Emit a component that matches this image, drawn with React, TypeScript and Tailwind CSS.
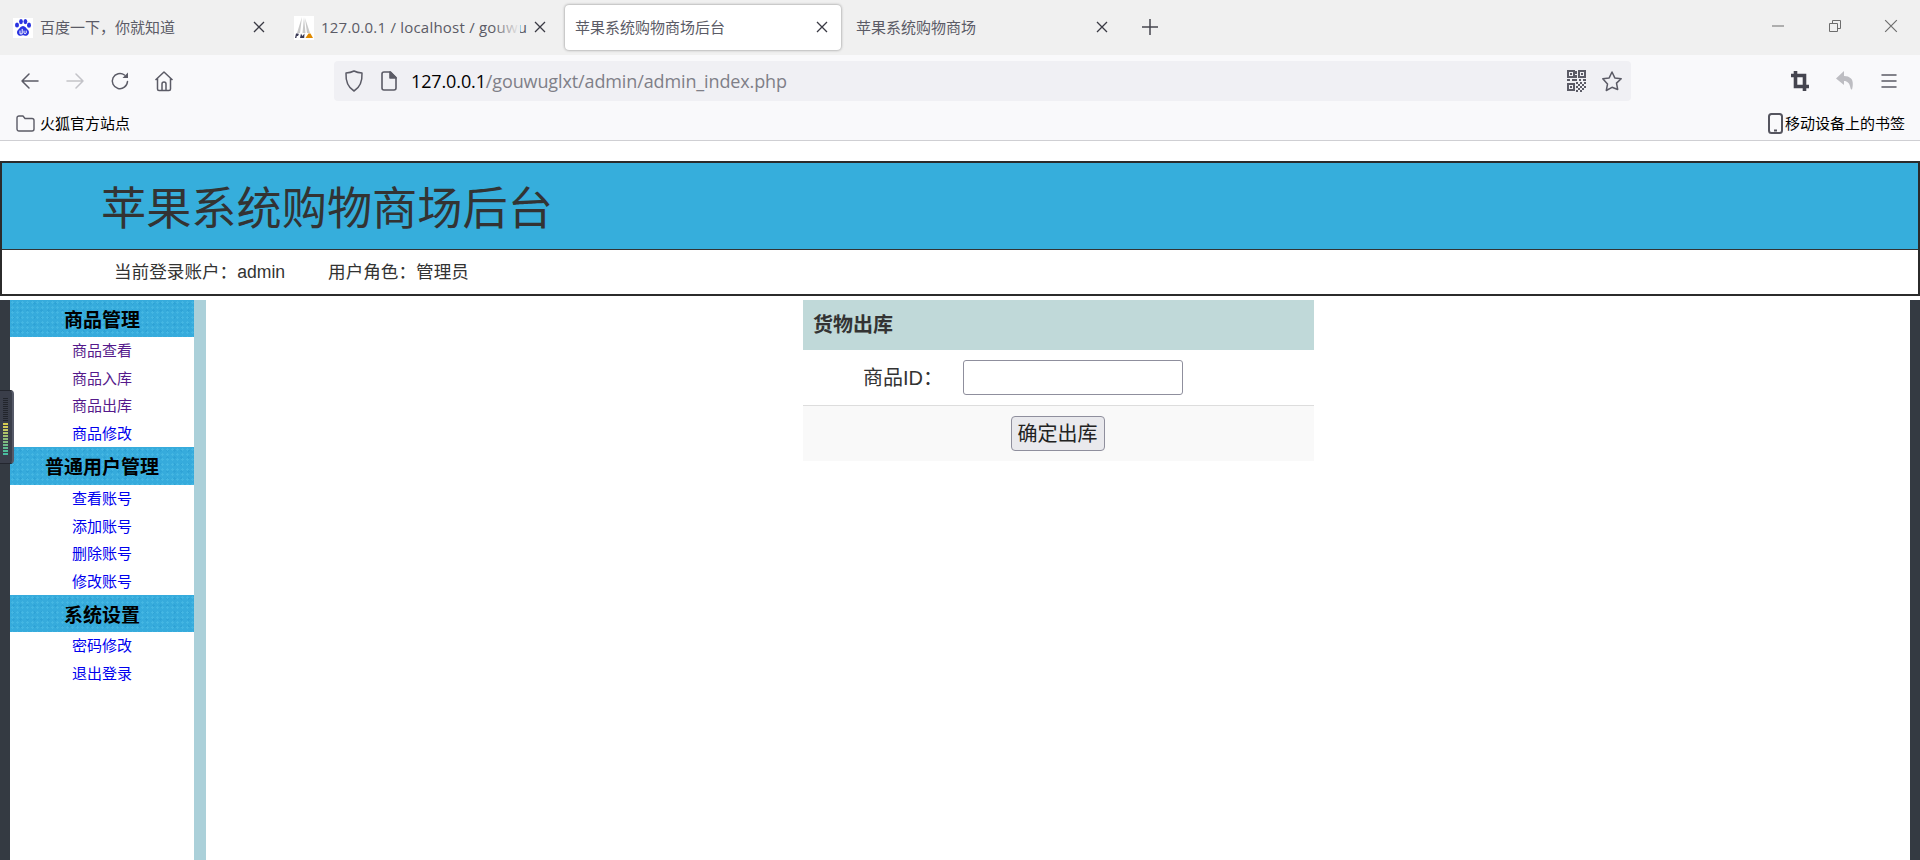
import React from "react";

const UI = { fontFamily: '"Open Sans","Noto Sans CJK SC",sans-serif' };
const PAGE = { fontFamily: '"Liberation Sans","Noto Sans CJK SC",sans-serif' };

const CloseX = ({ size = 12, color = "#3a3a44", width = 1.3 }: { size?: number; color?: string; width?: number }) => (
  <svg width={size} height={size} viewBox="0 0 12 12" fill="none" stroke={color} strokeWidth={width}>
    <path d="M1 1l10 10M11 1L1 11" />
  </svg>
);

const BaiduIcon = () => (
  <svg width="20" height="20" viewBox="0 0 20 20" className="bg-white">
    <g fill="#2932e1">
      <ellipse cx="4" cy="7" rx="2" ry="2.6" />
      <ellipse cx="8" cy="3.6" rx="1.9" ry="2.6" />
      <ellipse cx="12.4" cy="3.6" rx="1.9" ry="2.6" />
      <ellipse cx="16" cy="7.2" rx="2" ry="2.6" />
      <path d="M10 8c2.4 0 3 2.4 4.8 3.8 2 1.6 1.4 5.6-1.6 6-1.4.2-2.2-.5-3.2-.5s-1.8.7-3.2.5c-3-.4-3.6-4.4-1.6-6C7 10.4 7.6 8 10 8z" />
    </g>
    <path d="M7 12.5v3.4h2.2v-5M11 12.6v2.4c0 .9 2.2.9 2.2 0v-2.400" fill="none" stroke="#fff" strokeWidth="1" />
  </svg>
);

const PmaIcon = () => (
  <svg width="20" height="24" viewBox="0 0 20 24" className="bg-white">
    <path d="M8 1L3 17h3zM10 1L8.500 17h3zM11 2l2 15h3z" fill="#c9c9c9" />
    <path d="M1 22l1-4.500h2.400l.4 1.200-1 1.400H2.800L2.400 22zM6 22l1-4.500 1.400 2.400L10.500 17.500 10.200 22z" fill="#3a3a55" />
    <path d="M11.500 22l3-4.500h2l2.500 4.500z" fill="#e08a00" />
  </svg>
);

const Tab = ({ w, icon, title, active, closeGap, textClass, fade }: any) => (
  <div className={`relative flex h-[45px] shrink-0 items-center ${w} ${active ? "rounded bg-white shadow-[0_0_3px_rgba(0,0,0,0.45)]" : ""}`}>
    {icon}
    <span className={`text-[15px] leading-none text-[#5b5b66] whitespace-nowrap ${textClass ?? ""}`}>{title}</span>
    {fade && <span className="absolute left-[210px] top-[10px] h-[24px] w-[27px] bg-gradient-to-r from-transparent to-[#f0f0f0]" />}
    <span className={`absolute top-[16px] flex ${closeGap}`}><CloseX /></span>
  </div>
);

const Back = ({ color = "#5b5b66" }: { color?: string }) => (
  <svg width="20" height="20" viewBox="0 0 20 20" fill="none" stroke={color} strokeWidth="1.5" strokeLinecap="round" strokeLinejoin="round">
    <path d="M18 10H2M9 3l-7 7 7 7" />
  </svg>
);

const Reload = () => (
  <svg width="20" height="20" viewBox="0 0 20 20" fill="none" stroke="#5b5b66" strokeWidth="1.5" strokeLinecap="round">
    <path d="M17.5 10.5A7.6 7.6 0 1 1 14.5 4" />
    <path d="M18 1.5V7h-5.5z" fill="#5b5b66" stroke="none" />
  </svg>
);

const Home = () => (
  <svg width="20" height="22" viewBox="0 0 20 22" fill="none" stroke="#5b5b66" strokeWidth="1.5" strokeLinejoin="round">
    <path d="M1.500 10L10 2l8.500 8M3.500 8.500V19a1.500 1.500 0 0 0 1.500 1.500h10a1.500 1.500 0 0 0 1.500-1.500V8.500M8 20.500V14a2 2 0 0 1 4 0v6.500" />
  </svg>
);

const Shield = () => (
  <svg width="20" height="24" viewBox="0 0 20 24" fill="none" stroke="#5b5b66" strokeWidth="1.5" strokeLinejoin="round">
    <path d="M10 2c2.500 1.300 5 1.900 8 2 .4 8-1.300 14-8 18C3.300 18 1.600 12 2 4c3-.1 5.500-.7 8-2z" />
  </svg>
);

const PageIcon = () => (
  <svg width="16" height="20" viewBox="0 0 16 20" fill="none" stroke="#5b5b66" strokeWidth="1.6" strokeLinejoin="round">
    <path d="M3 1h6.500L15 6.500V17a2 2 0 0 1-2 2H3a2 2 0 0 1-2-2V3a2 2 0 0 1 2-2z" />
    <path d="M9 1v6h6z" fill="#5b5b66" />
  </svg>
);

const Qr = () => (
  <svg width="19" height="22" viewBox="0 0 19 22" shapeRendering="crispEdges">
    <g fill="none" stroke="#5b5b66" strokeWidth="1.5">
      <rect x="1" y="1" width="6" height="6" />
      <rect x="12" y="1" width="6" height="6" />
      <rect x="1" y="14" width="6" height="6" />
    </g>
    <g fill="#5b5b66">
      <rect x="3" y="3" width="2" height="2" />
      <rect x="14" y="3" width="2" height="2" />
      <rect x="3" y="16" width="2" height="2" />
      <rect x="8" y="1" width="2" height="3" />
      <rect x="8" y="5" width="2" height="3" />
      <rect x="0" y="9" width="3" height="2" />
      <rect x="5" y="9" width="5" height="2" />
      <rect x="12" y="9" width="2" height="2" />
      <rect x="16" y="9" width="3" height="2" />
      <rect x="9" y="12" width="2" height="2" />
      <rect x="13" y="12" width="2" height="2" />
      <rect x="17" y="12" width="2" height="2" />
      <rect x="11" y="14" width="2" height="2" />
      <rect x="15" y="14" width="2" height="2" />
      <rect x="9" y="16" width="2" height="2" />
      <rect x="13" y="16" width="2" height="2" />
      <rect x="17" y="16" width="2" height="2" />
      <rect x="11" y="18" width="2" height="2" />
      <rect x="15" y="18" width="2" height="2" />
      <rect x="9" y="20" width="2" height="2" />
      <rect x="13" y="20" width="2" height="2" />
    </g>
  </svg>
);

const Star = () => (
  <svg width="22" height="22" viewBox="0 0 22 22" fill="none" stroke="#5b5b66" strokeWidth="1.5" strokeLinejoin="round">
    <path d="M11 2l2.800 5.900 6.400.8-4.700 4.400 1.200 6.400L11 17.300l-5.700 3.200 1.200-6.400L1.800 8.700l6.400-.8z" />
  </svg>
);

const Crop = () => (
  <svg width="18" height="20" viewBox="0 0 18 20" fill="none" stroke="#45454f" strokeWidth="3.6">
    <path d="M4.500 0v15.500H18M0 4.500h13.500V20" />
  </svg>
);

const Undo = () => (
  <svg width="18" height="22" viewBox="0 0 18 22" fill="#bdbdc2">
    <path d="M8 1L0 8.500 8 15v-4c3.500 0 5.500 2 6.500 7 .2 1 .8 1.500 1.500 1.500 1-3.500 1.500-8.500-1-11-1.700-1.700-4-2.500-7-2.500z" />
  </svg>
);

const Menu = () => (
  <svg width="16" height="16" viewBox="0 0 16 16" stroke="#5b5b66" strokeWidth="1.5" strokeLinecap="round">
    <path d="M1 2h14M1 8h14M1 14h14" />
  </svg>
);

const Folder = () => (
  <svg width="19" height="17" viewBox="0 0 19 17" fill="none" stroke="#5b5b66" strokeWidth="1.4" strokeLinejoin="round">
    <path d="M1 3a2 2 0 0 1 2-2h4l2 2.500h7a2 2 0 0 1 2 2V14a2 2 0 0 1-2 2H3a2 2 0 0 1-2-2z" />
  </svg>
);

const Phone = () => (
  <svg width="15" height="21" viewBox="0 0 15 21" fill="none" stroke="#55555f" strokeWidth="2">
    <rect x="1" y="1" width="13" height="19" rx="2.500" />
    <rect x="6" y="16.500" width="3" height="2" fill="#55555f" stroke="none" />
  </svg>
);

const LED = ["#d8cc50", "#d4cc58", "#c4c860", "#b0c468", "#a0c070", "#90bc78", "#80bc80", "#70bc88", "#60bc90", "#50bc98", "#48bca0", "#40bca8"];

const Slider = () => (
  <div className="absolute left-0 top-[390px] h-[74px] w-[14px] rounded-r-[4px] border-r-2 border-b border-t border-r-[#565a68] border-b-[#23262e] border-t-[#23262e] bg-[#3a3e4a]">
    <svg width="5" height="58" viewBox="0 0 5 58" className="ml-[3px] mt-[7px]" shapeRendering="crispEdges">
      {Array.from({ length: 12 }).map((_, i) => (
        <rect key={i} x="0" y={i * 2} width="5" height="1" fill="#22252c" />
      ))}
      {LED.map((c, i) => (
        <rect key={c} x="0" y={25 + i * 3} width="5" height="2" fill={c} />
      ))}
    </svg>
  </div>
);

const SideHead = ({ title, h }: { title: string; h: string }) => (
  <div className={`flex ${h} items-center justify-center bg-[#36abdc] bg-[radial-gradient(#44b6e2_1.2px,transparent_1.4px),radial-gradient(#2fa3d6_1px,transparent_1.2px)] bg-[length:5px_5px,7px_7px] pt-[3px] text-[19px] font-bold leading-none text-black`}>
    {title}
  </div>
);

const SideLink = ({ label, visited }: { label: string; visited?: boolean }) => (
  <a className={`flex h-[27.5px] items-center justify-center pt-[1px] text-[15px] ${visited ? "text-[#551a8b]" : "text-[#0000ee]"}`}>{label}</a>
);

export default function App() {
  return (
    <div className="relative flex h-[860px] w-[1920px] flex-col overflow-hidden bg-white">
      {/* browser chrome */}
      <div style={UI} className="flex h-[55px] items-start bg-[#f0f0f0] pt-[5px]">
        <Tab w="w-[283px]" icon={<span className="ml-[13px] mr-[7px] flex"><BaiduIcon /></span>} title="百度一下，你就知道" closeGap="left-[253px]" />
        <Tab w="w-[282px]" fade icon={<span className="ml-[11px] mr-[7px] flex"><PmaIcon /></span>} title="127.0.0.1 / localhost / gouwu" textClass="tracking-[0.22px]" closeGap="left-[251px]" />
        <Tab w="w-[276px]" active title="苹果系统购物商场后台" textClass="ml-[10px]" closeGap="left-[251px]" />
        <Tab w="w-[300px]" title="苹果系统购物商场" textClass="ml-[15px]" closeGap="left-[255px]" />
        <span className="mt-[13px] flex">
          <svg width="18" height="18" viewBox="0 0 18 18" stroke="#45454f" strokeWidth="1.5"><path d="M9 1v16M1 9h16" /></svg>
        </span>
        <div className="ml-auto flex items-center pt-[14px]">
          <svg width="14" height="14" viewBox="0 0 14 14" stroke="#6d6d6d" strokeWidth="1" className="mr-[43px]"><path d="M1 7h12" /></svg>
          <svg width="14" height="14" viewBox="0 0 14 14" fill="none" stroke="#6d6d6d" strokeWidth="1" className="mr-[42px]"><path d="M1.500 4.500h8v8h-8zM4.500 4.500v-3h8v8h-3" /></svg>
          <span className="mr-[22px] flex"><CloseX size={14} color="#6d6d6d" width={1} /></span>
        </div>
      </div>
      <div style={UI} className="h-[86px] border-b border-[#cfcfd3] bg-[#f9f9fb]">
        <div className="flex h-[52px] items-center">
          <span className="ml-[20px] flex"><Back /></span>
          <span className="ml-[25px] flex rotate-180"><Back color="#c3c3c8" /></span>
          <span className="ml-[25px] flex"><Reload /></span>
          <span className="ml-[24px] flex"><Home /></span>
          <div className="ml-[160px] flex h-[40px] w-[1297px] items-center rounded bg-[#f0f0f4]">
            <span className="ml-[10px] flex"><Shield /></span>
            <span className="ml-[17px] flex"><PageIcon /></span>
            <span className="ml-[14px] text-[18px] tracking-[-0.12px] text-black">127.0.0.1<span className="text-[#7f7f88]">/gouwuglxt/admin/admin_index.php</span></span>
            <span className="ml-auto flex"><Qr /></span>
            <span className="ml-[15px] mr-[8px] flex"><Star /></span>
          </div>
          <span className="ml-[160px] flex"><Crop /></span>
          <span className="ml-[27px] flex"><Undo /></span>
          <span className="ml-[27px] flex"><Menu /></span>
        </div>
        <div className="flex h-[33px] items-center text-[15px] text-black">
          <span className="ml-[16px] mr-[5px] flex"><Folder /></span>
          <span>火狐官方站点</span>
          <span className="ml-auto flex"><Phone /></span>
          <span className="ml-[2px] mr-[15px]">移动设备上的书签</span>
        </div>
      </div>

      {/* page */}
      <div style={PAGE} className="mt-[20px] flex min-h-0 flex-1 flex-col">
        <header className="h-[135px] border-2 border-[#2b2b2b]">
          <div className="flex h-[86px] items-center bg-[#36aedc] pl-[99px] pt-[8px] text-[45.2px] leading-none text-[#333]">
            苹果系统购物商场后台
          </div>
          <div className="flex h-[45px] items-center gap-[43px] border-t border-[#333] pl-[112px] text-[17.6px] text-[#333]">
            <span>当前登录账户：admin</span>
            <span>用户角色：管理员</span>
          </div>
        </header>
        <div className="mt-[4px] flex min-h-0 flex-1">
          <div className="w-[10px] bg-[#343a42]" />
          <aside className="w-[184px] bg-white">
            <SideHead title="商品管理" h="h-[37px]" />
            <SideLink label="商品查看" visited />
            <SideLink label="商品入库" visited />
            <SideLink label="商品出库" visited />
            <SideLink label="商品修改" />
            <SideHead title="普通用户管理" h="h-[38px]" />
            <SideLink label="查看账号" />
            <SideLink label="添加账号" />
            <SideLink label="删除账号" />
            <SideLink label="修改账号" />
            <SideHead title="系统设置" h="h-[37px]" />
            <SideLink label="密码修改" />
            <SideLink label="退出登录" />
          </aside>
          <div className="w-[12px] bg-[#abd0d9]" />
          <main className="flex flex-1 justify-center pl-[1px]">
            <section className="h-[161px] w-[511px] text-[#333]">
              <div className="flex h-[50px] items-center bg-[#c0d9d9] pl-[10px] text-[20px] font-bold">货物出库</div>
              <div className="flex h-[56px] items-center border-b border-[#dddddd]">
                <label className="w-[160px] pl-[60px] text-[20px] whitespace-nowrap">商品ID：</label>
                <input className="h-[35px] w-[220px] rounded-[3px] border border-[#8f8f9d] bg-white" />
              </div>
              <div className="flex h-[55px] items-center justify-center bg-[#f9f9f9]">
                <button className="mr-[2px] h-[35px] w-[94px] rounded-[4px] border border-[#8f8f9d] bg-[#e9e9ed] text-[20px] leading-none text-[#222]">确定出库</button>
              </div>
            </section>
          </main>
          <div className="w-[10px] bg-[#343a42]" />
        </div>
      </div>
      <Slider />
    </div>
  );
}
